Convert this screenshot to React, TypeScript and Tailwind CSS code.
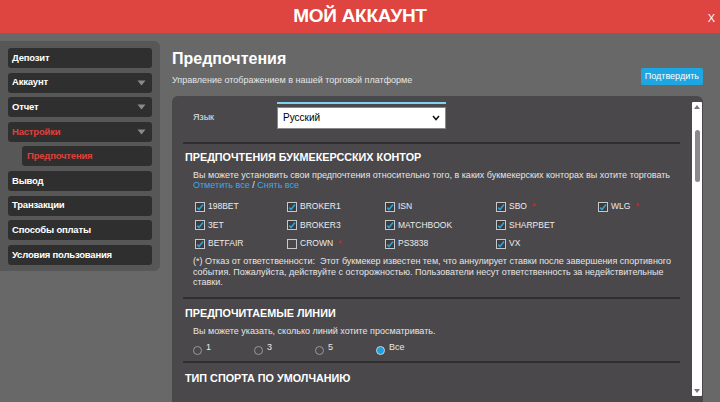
import React from "react";

const font = { fontFamily: '"Liberation Sans", Arial, sans-serif' };

function Caret() {
  return (
    <svg width="9" height="6" viewBox="0 0 9 6" className="mr-[6px]">
      <path d="M0.5 0.5 L8.5 0.5 L4.5 5.5 Z" fill="#8a8a8a" />
    </svg>
  );
}

function SideItem({ label, caret, active, indent }: { label: string; caret?: boolean; active?: boolean; indent?: boolean }) {
  return (
    <div
      className={`h-[20px] rounded-[3px] bg-[#2f2f2f] flex items-center justify-between ${indent ? "ml-[14px] pl-[5px]" : "pl-[4px]"}`}
    >
      <span className={`text-[9.5px] font-bold tracking-[-0.2px] ${active ? "text-[#e0403b]" : "text-white"}`}>{label}</span>
      {caret && <Caret />}
    </div>
  );
}

function Check({ checked }: { checked: boolean }) {
  return (
    <svg width="10" height="10" viewBox="0 0 10 10" className="shrink-0">
      <rect x="0.5" y="0.5" width="9" height="9" fill={checked ? "#3c3c3e" : "#4a484b"} stroke="#c8c8c8" strokeWidth="1" />
      {checked && <path d="M2.2 5.6 L4 7.6 L8 2.4" fill="none" stroke="#2f9fd8" strokeWidth="1.6" />}
    </svg>
  );
}

function Book({ name, checked = true, star }: { name: string; checked?: boolean; star?: boolean }) {
  return (
    <div className="flex items-center gap-[2px] h-[18.5px]">
      <Check checked={checked} />
      <span className="text-[8.5px] text-[#ececec] ml-[1px]">{name}</span>
      {star && <span className="text-[#e02020] text-[9px] ml-[3px] leading-none">*</span>}
    </div>
  );
}

function Radio({ label, on }: { label: string; on?: boolean }) {
  return (
    <div className="flex items-start gap-[4px] w-[61px]">
      <span
        className={`mt-[3px] w-[9px] h-[9px] rounded-full border ${on ? "bg-[#1e9fe0] border-[#d0d0d0]" : "border-[#9a9a9a] bg-transparent"}`}
      />
      <span className="text-[9px] text-[#e8e8e8] leading-none">{label}</span>
    </div>
  );
}

function Divider() {
  return <div className="h-[2px] bg-[#2e2d2f] w-[497px]" />;
}

export default function App() {
  return (
    <div className="w-[720px] h-[402px] bg-[#686868] overflow-hidden flex flex-col" style={font}>
      <div className="h-[33px] bg-[#de4440] relative flex items-center justify-center shrink-0">
        <span className="text-white font-bold text-[19px] tracking-[-0.3px]">МОЙ АККАУНТ</span>
        <span className="absolute right-[5px] top-[10px] text-white text-[11px]">X</span>
      </div>
      <div className="flex flex-1 min-h-0">
        <div className="w-[160px] shrink-0 mt-[8px] self-start bg-[#575757] rounded-r-[6px] pl-[8px] pr-[8px] pt-[7px] pb-[6px] flex flex-col gap-[4.6px]">
          <SideItem label="Депозит" />
          <SideItem label="Аккаунт" caret />
          <SideItem label="Отчет" caret />
          <SideItem label="Настройки" caret active />
          <SideItem label="Предпочтения" active indent />
          <SideItem label="Вывод" />
          <SideItem label="Транзакции" />
          <SideItem label="Способы оплаты" />
          <SideItem label="Условия пользования" />
        </div>
        <div className="ml-[12px] w-[531px] flex flex-col min-h-0">
          <div className="pt-[16px] text-white font-bold text-[16px] leading-[20px]">Предпочтения</div>
          <div className="flex items-start justify-between -mt-[1px]">
            <span className="text-[9px] text-[#e6e6e6] mt-[6px]">Управление отображением в нашей торговой платформе</span>
            <span className="bg-[#1ea6e2] text-white text-[9px] rounded-[2px] px-[4px] h-[17px] flex items-center">Подтвердить</span>
          </div>
          <div className="mt-[8px] flex-1 bg-[#4a484b] rounded-t-[6px] flex min-h-0 overflow-hidden">
            <div className="flex-1 pl-[11px] flex flex-col">
              <div className="flex mt-[6px]">
                <div className="w-[94px] pl-[10px] text-[9px] text-[#e6e6e6] pt-[9px]">Язык</div>
                <div className="flex flex-col">
                  <div className="h-[2px] w-[169px] bg-[#7fd3ef]" />
                  <div className="mt-[3px] w-[169px] h-[22px] bg-white border border-[#888] flex items-center justify-between px-[5px]">
                    <span className="text-[10px] text-black">Русский</span>
                    <svg width="8" height="6" viewBox="0 0 8 6">
                      <path d="M1 1 L4 4.5 L7 1" fill="none" stroke="#111" strokeWidth="1.5" />
                    </svg>
                  </div>
                </div>
              </div>
              <div className="mt-[13px]"><Divider /></div>
              <div className="pl-[2px] mt-[6px] text-[10.8px] font-bold text-white leading-[14px]">ПРЕДПОЧТЕНИЯ БУКМЕКЕРССКИХ КОНТОР</div>
              <div className="pl-[10px] mt-[6px] text-[9px] leading-[10.5px] text-[#e6e6e6]">
                Вы можете установить свои предпочтения относительно того, в каких букмекерских конторах вы хотите торговать
              </div>
              <div className="pl-[10px] text-[9px] leading-[10.5px] text-[#e6e6e6]">
                <span className="text-[#3ea8e6]">Отметить все</span> / <span className="text-[#3ea8e6]">Снять все</span>
              </div>
              <div className="pl-[12px] mt-[7px] grid grid-cols-[92px_98px_111px_102px_1fr]">
                <Book name="198BET" />
                <Book name="BROKER1" />
                <Book name="ISN" />
                <Book name="SBO" star />
                <Book name="WLG" star />
                <Book name="3ET" />
                <Book name="BROKER3" />
                <Book name="MATCHBOOK" />
                <Book name="SHARPBET" />
                <div />
                <Book name="BETFAIR" />
                <Book name="CROWN" checked={false} star />
                <Book name="PS3838" />
                <Book name="VX" />
              </div>
              <div className="pl-[10px] mt-[3px] text-[9px] leading-[10.5px] text-[#e6e6e6]">
                (*) Отказ от ответственности:&nbsp; Этот букмекер известен тем, что аннулирует ставки после завершения спортивного
                <br />
                события. Пожалуйста, действуйте с осторожностью. Пользователи несут ответственность за недействительные
                <br />
                ставки.
              </div>
              <div className="mt-[9px]"><Divider /></div>
              <div className="pl-[2px] mt-[7px] text-[10.8px] font-bold text-white leading-[14px]">ПРЕДПОЧИТАЕМЫЕ ЛИНИИ</div>
              <div className="pl-[10px] mt-[6px] text-[9px] leading-[10.5px] text-[#e6e6e6]">
                Вы можете указать, сколько линий хотите просматривать.
              </div>
              <div className="pl-[10px] mt-[7px] flex h-[16px]">
                <Radio label="1" />
                <Radio label="3" />
                <Radio label="5" />
                <Radio label="Все" on />
              </div>
              <div className="mt-[2px]"><Divider /></div>
              <div className="pl-[2px] mt-[8px] text-[10.8px] font-bold text-white leading-[14px]">ТИП СПОРТА ПО УМОЛЧАНИЮ</div>
            </div>
            <div className="w-[10px] mr-[1px] mt-[6px] mb-[6px] bg-white rounded-[1px] flex flex-col items-center">
              <svg width="6" height="4" viewBox="0 0 6 4" className="mt-[3px]">
                <path d="M0 4 L3 0 L6 4 Z" fill="#777" />
              </svg>
              <div className="mt-[21px] w-[5px] h-[52px] rounded-full bg-[#8a8a8a]" />
              <div className="flex-1" />
              <svg width="6" height="4" viewBox="0 0 6 4" className="mb-[3px]">
                <path d="M0 0 L6 0 L3 4 Z" fill="#777" />
              </svg>
            </div>
          </div>
        </div>
      </div>
    </div>
  );
}
